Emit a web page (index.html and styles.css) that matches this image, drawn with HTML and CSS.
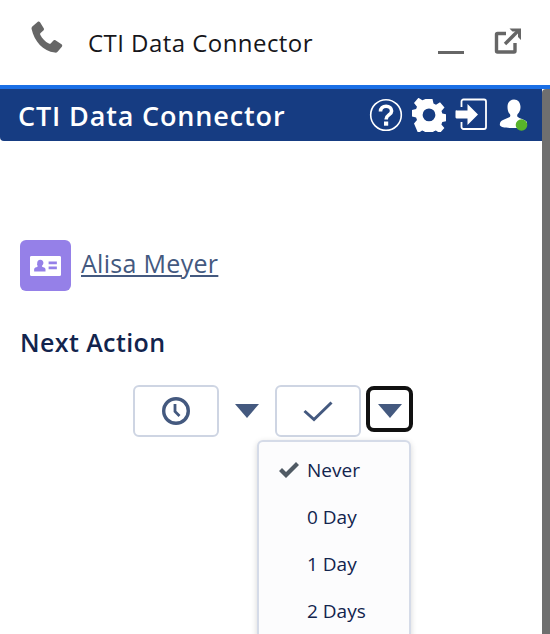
FILE: index.html
```html
<!DOCTYPE html>
<html lang="en">

<head>
    <meta charset="UTF-8">
    <title>CTI Data Connector</title>
    <link rel="stylesheet" href="styles.css">
</head>

<body>
    <!-- Softphone window header -->
    <header class="window-header">
        <svg class="phone-icon" viewBox="0 0 32 32" width="36" height="36">
            <path fill="#666" d="M3.2 4.6 7.6.9c.7-.6 1.7-.4 2.2.3l3.3 5.2c.4.7.3 1.5-.3 2L10.300 10.600c-.5.4-.6 1-.3 1.600 1.700 3.400 4.300 6 7.700 7.900.6.3 1.200.2 1.600-.2l2.200-2.400c.5-.6 1.400-.7 2-.3l5.400 3.500c.7.5.9 1.500.3 2.200l-3.800 4.400c-.6.7-1.500 1-2.400.8C12.500 26.400 4.800 18.300 2.300 7 2.100 6 2.500 5.200 3.200 4.600Z" />
        </svg>
        <span class="window-title">CTI Data Connector</span>
        <span class="minimize-icon"></span>
        <svg class="popout-icon" viewBox="0 0 28 28" width="28" height="28">
            <path fill="none" stroke="#666" stroke-width="3.400" d="M12 6.500H3.500a1 1 0 0 0-1 1V24a1 1 0 0 0 1 1H20a1 1 0 0 0 1-1v-8" />
            <path fill="none" stroke="#666" stroke-width="3.400" d="M11 17 24 4" />
            <path fill="#666" d="M15.500 1.500H27V13l-3-3V4.500h-5.500Z" />
        </svg>
    </header>

    <div class="app">
        <!-- Blue title bar -->
        <div class="title-bar">
            <h1>CTI Data Connector</h1>
            <div class="bar-icons">
                <svg viewBox="0 0 34 34" width="34" height="34">
                    <circle cx="17" cy="17" r="15.300" fill="none" stroke="#fff" stroke-width="1.600" />
                    <path fill="none" stroke="#fff" stroke-width="3.600" d="M11.500 13.500c0-3.300 2.400-5.300 5.600-5.300 3.200 0 5.500 1.900 5.500 4.700 0 4-5.400 4-5.400 8v.6" />
                    <rect x="15" y="23.500" width="4.200" height="4.200" fill="#fff" />
                </svg>
                <svg viewBox="0 0 34 34" width="34" height="34">
                    <path fill="#fff" fill-rule="evenodd" d="M13.500 1h7l1 4.600 2.500 1.100 4-2.500 4.500 5.300-3 3.600.8 2.400 4.700.9v6.600l-4.700 1-.9 2.400 3 3.600-4.600 5.100-3.900-2.500-2.500 1-1 4.500h-6.800l-1-4.500-2.500-1-4 2.500L2 25.600l3-3.600-.9-2.400-4.100-1v-6.600l4.100-.9.900-2.400-3-3.600 4.400-5.300 4 2.500 2.500-1.100ZM17 10.500a6.400 6.400 0 1 0 0 12.800 6.400 6.400 0 0 0 0-12.800Z" />
                </svg>
                <svg viewBox="0 0 34 34" width="34" height="34">
                    <path fill="none" stroke="#fff" stroke-width="1.800" d="M6.500 9V3.500a2 2 0 0 1 2-2H29a2 2 0 0 1 2 2V29a2 2 0 0 1-2 2H8.500a2 2 0 0 1-2-2v-5" />
                    <path fill="#fff" d="M1.500 12.500h11V6l10.500 10.500L12.500 27v-6.500h-11a1.500 1.500 0 0 1-1-1.500v-5.500a1.500 1.500 0 0 1 1-1.500Z" />
                </svg>
                <svg viewBox="0 0 34 34" width="34" height="34">
                    <path fill="#fff" d="M16 1.500c4 0 6.500 3 6.500 7.500 0 3-1.200 5.500-2.800 7-.6.600-.7 2-.2 2.700 1.500 1.700 7.500 2.700 9.500 5.300v3c-1.500 2.300-4 3-13 3s-12.500-.5-14-2.500c-.6-2.500.4-4.500 3-5.600l6.800-3c.7-.6.700-2.100 0-2.800C10.200 14.500 9.500 11.500 9.500 9c0-4.500 2.500-7.500 6.500-7.500Z" />
                    <circle cx="23.500" cy="27" r="5.800" fill="#58b32a" />
                </svg>
            </div>
        </div>

        <main class="content">
            <div class="contact">
                <span class="contact-icon">
                    <svg viewBox="0 0 30 22" width="31" height="20" preserveAspectRatio="none">
                        <path fill="#fff" d="M1.500 0h27A1.500 1.500 0 0 1 30 1.500v19a1.500 1.500 0 0 1-1.500 1.500h-27A1.500 1.500 0 0 1 0 20.500v-19A1.500 1.500 0 0 1 1.500 0Z" />
                        <path fill="#9580e8" d="M10 4c2 0 3 1.500 3 3.500 0 1.300-.5 2.400-1.200 3-.4.400-.3 1 .1 1.300 1 .6 3.100 1 3.100 2.700V17H4v-2.500c0-1.700 2.100-2.100 3.100-2.700.4-.3.500-.9.100-1.300C6.500 9.900 7 9 7 7.500 7 5.500 8 4 10 4ZM18 6h8v3h-8ZM18 11.500h8v3h-8Z" />
                    </svg>
                </span>
                <a href="#" class="contact-name">Alisa Meyer</a>
            </div>

            <h2 class="section-title">Next Action</h2>

            <div class="action-row">
                <button type="button" class="action-btn">
                    <svg viewBox="0 0 30 30" width="30" height="30">
                        <circle cx="15" cy="15" r="12.300" fill="none" stroke="#44597f" stroke-width="3.400" />
                        <path fill="none" stroke="#44597f" stroke-width="2.800" d="M14 8v7.500l4.500 4.500" />
                    </svg>
                </button>
                <button type="button" class="caret-btn"><span class="caret"></span></button>
                <button type="button" class="action-btn">
                    <svg viewBox="0 0 30 22" width="30" height="22">
                        <path fill="none" stroke="#44597f" stroke-width="3" d="M1.500 11 11 19.500 28.500 2.500" />
                    </svg>
                </button>
                <button type="button" class="caret-btn caret-focus"><span class="caret"></span></button>

                <!-- Open dropdown -->
                <ul class="menu">
                    <li class="menu-item">
                        <svg class="menu-check" viewBox="0 0 20 16" width="20" height="16">
                            <path fill="#505a64" d="M0 9l3-3 4 4L17 0l3 3L7 16Z" />
                        </svg>
                        Never
                    </li>
                    <li class="menu-item">0 Day</li>
                    <li class="menu-item">1 Day</li>
                    <li class="menu-item">2 Days</li>
                </ul>
            </div>
        </main>

        <div class="scrollbar"></div>
    </div>
</body>

</html>
```

FILE: styles.css
```css
html,
body {
    height: 100%;
}

body {
    margin: 0;
    display: flex;
    flex-direction: column;
    overflow: hidden;
    background-color: #fff;
    font-family: "Open Sans", sans-serif;
}

/* Window header */
.window-header {
    display: flex;
    align-items: center;
    height: 85px;
    flex-shrink: 0;
    padding: 0 28px 0 29px;
    box-sizing: border-box;
}

.phone-icon {
    margin-top: -8px;
}

.window-title {
    margin-left: 23px;
    flex-grow: 1;
    font-size: 24px;
    letter-spacing: 0.45px;
    color: #16161a;
}

.minimize-icon {
    width: 26px;
    height: 3px;
    margin-top: 19px;
    background-color: #666;
}

.popout-icon {
    margin-left: 30px;
    margin-top: -4px;
}

/* App area */
.app {
    position: relative;
    flex-grow: 1;
    border-top: 4px solid #1a6fe6;
}

.title-bar {
    display: flex;
    align-items: center;
    justify-content: space-between;
    height: 52px;
    padding: 0 18px;
    margin-right: 8px;
    box-sizing: border-box;
    background-color: #163c82;
    border-bottom-left-radius: 4px;
}

.title-bar h1 {
    margin: 0;
    font-size: 27px;
    font-weight: 600;
    letter-spacing: 0.85px;
    color: #fff;
}

.bar-icons {
    display: flex;
    gap: 9px;
    margin-right: -8px;
}

.content {
    padding: 99px 20px 0;
}

.contact {
    display: flex;
    align-items: center;
    gap: 10px;
}

.contact-icon {
    display: flex;
    align-items: center;
    justify-content: center;
    width: 51px;
    height: 51px;
    border-radius: 6px;
    background-color: #9580e8;
}

.contact-name {
    margin-top: -6px;
    font-size: 25px;
    letter-spacing: 0.3px;
    color: #44597f;
}

.section-title {
    margin: 34px 0 26px;
    font-size: 25px;
    font-weight: 600;
    letter-spacing: 0.4px;
    color: #12244d;
}

/* Action buttons */
.action-row {
    position: relative;
    display: flex;
    align-items: center;
    margin-left: 113px;
}

.action-btn {
    display: flex;
    align-items: center;
    justify-content: center;
    width: 86px;
    height: 52px;
    padding: 0;
    background-color: #fff;
    border: 2px solid #ced5e3;
    border-radius: 6px;
}

.caret-btn {
    display: flex;
    align-items: center;
    justify-content: center;
    width: 56px;
    height: 46px;
    padding: 0;
    background: none;
    border: none;
}

.caret-focus {
    margin-left: 5px;
    margin-top: -4px;
    padding-top: 4px;
    width: 47px;
    border: 4px solid #111;
    border-radius: 8px;
    box-sizing: border-box;
}

.caret {
    width: 0;
    height: 0;
    border-left: 12px solid transparent;
    border-right: 12px solid transparent;
    border-top: 14px solid #44597f;
}

/* Dropdown */
.menu {
    position: absolute;
    top: 55px;
    left: 124px;
    width: 154px;
    margin: 0;
    padding: 5px 0;
    list-style: none;
    box-sizing: border-box;
    background-color: #fcfcfd;
    border: 2px solid #d5dbe8;
    border-radius: 6px;
    box-shadow: 0 2px 6px rgba(0, 0, 0, 0.16);
}

.menu-item {
    position: relative;
    height: 47px;
    line-height: 47px;
    padding-left: 48px;
    font-size: 19px;
    color: #12244d;
}

.menu-check {
    position: absolute;
    left: 20px;
    top: 15px;
}

/* Page scrollbar */
.scrollbar {
    position: absolute;
    top: 0;
    right: 0;
    bottom: 0;
    width: 8px;
    background-color: #6f6f6f;
    border-top-left-radius: 4px;
}
```
